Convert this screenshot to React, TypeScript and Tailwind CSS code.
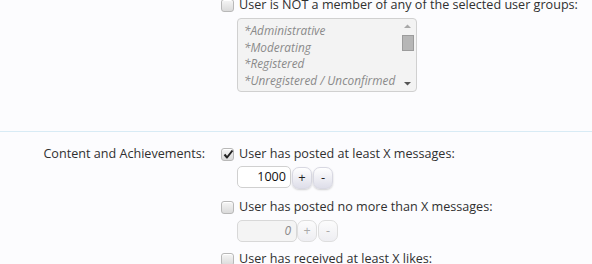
import React from "react";

function Check({ checked }: { checked?: boolean }) {
  return (
    <span className="relative inline-flex h-[13px] w-[13px] shrink-0 items-center justify-center rounded-[3px] border border-[#b8b8b8] bg-gradient-to-b from-[#f6f6f6] to-[#dadada] shadow-[inset_0_1px_0_#fff]">
      {checked && (
        <svg width="11" height="11" viewBox="0 0 11 11" className="absolute left-[1px] top-[0px]">
          <path d="M1.5 5.5 L4 8.5 L9.5 1.5" fill="none" stroke="#222" strokeWidth="2" strokeLinejoin="round" />
        </svg>
      )}
    </span>
  );
}

function Row({ checked, children }: { checked?: boolean; children: React.ReactNode }) {
  return (
    <div className="flex h-[16px] items-center">
      <Check checked={checked} />
      <span className="ml-[5px] whitespace-nowrap text-[12.6px] leading-[16px] text-[#303030]">{children}</span>
    </div>
  );
}

function Spinner({ value, disabled }: { value: string; disabled?: boolean }) {
  const btn = disabled
    ? "flex h-[22px] w-[20px] items-center justify-center rounded-[7px] border border-[#dedede] bg-gradient-to-b from-[#fcfcfc] to-[#eeeef2] text-[12.5px] text-[#aaa]"
    : "flex h-[22px] w-[20px] items-center justify-center rounded-[7px] border border-[#d8d8e2] bg-gradient-to-b from-[#ffffff] to-[#dedee9] text-[13px] text-[#222] shadow-[0_1px_2px_rgba(0,0,0,0.18)]";
  return (
    <div className="ml-[16px] flex items-start">
      <div
        className={
          disabled
            ? "flex h-[22px] w-[60px] items-center justify-end rounded-[5px] border border-[#d8d8d8] bg-[#f4f4f4] pr-[5px] text-[12px] italic text-[#8a8a8a]"
            : "flex h-[22px] w-[54px] items-center justify-end rounded-[5px] border border-[#d0d0d0] bg-white pr-[4px] text-[12.6px] text-[#111]"
        }
      >
        {value}
      </div>
      <div className={disabled ? "ml-[0px] mt-[0px]" : "ml-[1px] mt-[1px]"}>
        <div className={btn}>+</div>
      </div>
      <div className={disabled ? "ml-[1px] mt-[0px]" : "ml-[1px] mt-[1px]"}>
        <div className={btn}>-</div>
      </div>
    </div>
  );
}

export default function App() {
  const items = ["*Administrative", "*Moderating", "*Registered", "*Unregistered / Unconfirmed"];
  return (
    <div className="h-[264px] w-[592px] overflow-hidden bg-[#fcfcfe]" style={{ fontFamily: '"Open Sans", "Noto Sans", sans-serif' }}>
      <div className="-mt-[3px] pl-[221px]">
        <Row>User is NOT a member of any of the selected user groups:</Row>
        <div className="ml-[16px] mt-[5px] flex h-[74px] w-[180px] overflow-hidden rounded-[4px] border border-[#d0d0d0] bg-[#f3f3f3]">
          <div className="flex-1 pl-[6px] pt-[3px]">
            {items.map((t) => (
              <div key={t} className="h-[16.6px] whitespace-nowrap text-[11.8px] italic leading-[16.6px] text-[#8a8a8a]">
                {t}
              </div>
            ))}
          </div>
          <div className="relative w-[17px]">
            <svg width="17" height="72" viewBox="0 0 17 72" className="absolute left-0 top-0">
              <path d="M5 9 L8.5 5.5 L12 9 Z" fill="#a8a8a8" />
              <rect x="3.5" y="16.5" width="11" height="15" fill="#b6b6b6" stroke="#9c9c9c" />
              <path d="M5 63 L8.5 66.5 L12 63 Z" fill="#555" />
            </svg>
          </div>
        </div>
      </div>
      <div className="mt-[39px] border-t border-[#d8ebf5]" />
      <div className="mt-[14px] flex">
        <div className="w-[205px] text-right text-[12.6px] leading-[16px] text-[#303030]">Content and Achievements:</div>
        <div className="ml-[16px]">
          <Row checked>User has posted at least X messages:</Row>
          <div className="mt-[4px]">
            <Spinner value="1000" />
          </div>
          <div className="mt-[10px]">
            <Row>User has posted no more than X messages:</Row>
          </div>
          <div className="mt-[5px]">
            <Spinner value="0" disabled />
          </div>
          <div className="mt-[9px]">
            <Row>User has received at least X likes:</Row>
          </div>
        </div>
      </div>
    </div>
  );
}
